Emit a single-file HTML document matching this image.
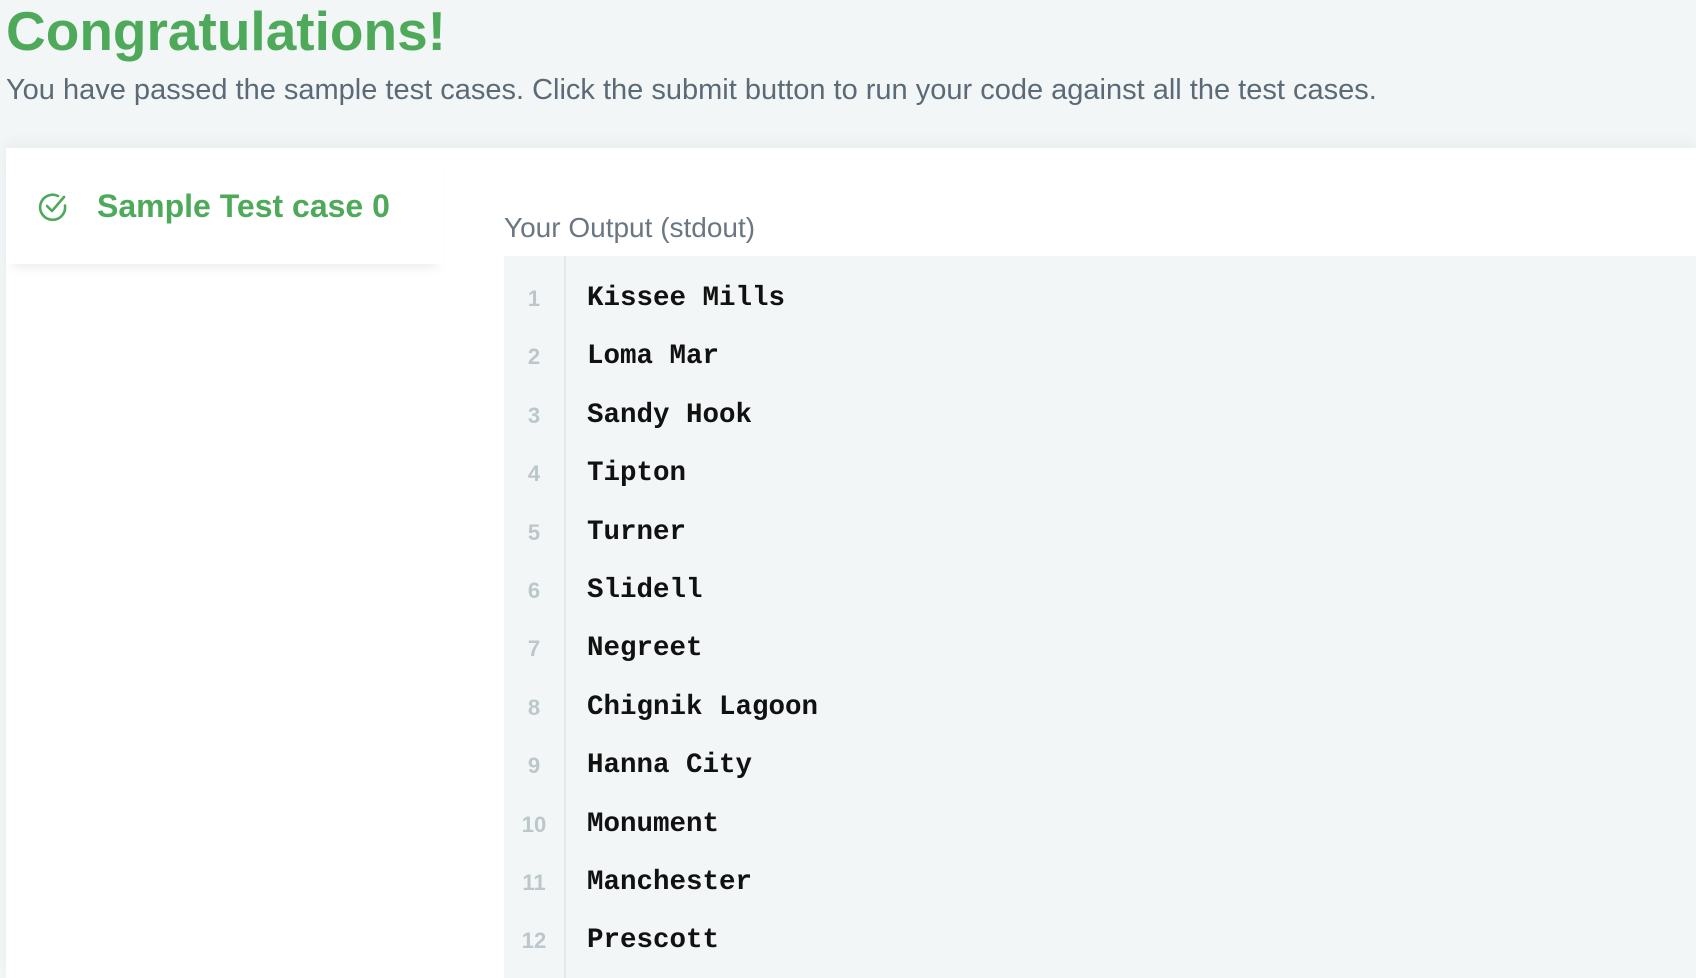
<!DOCTYPE html>
<html><head><meta charset="utf-8"><style>
html,body{margin:0;padding:0;width:1696px;height:978px;overflow:hidden;background:#f2f6f7;font-family:"Liberation Sans",sans-serif;}
.title{position:absolute;left:6px;top:-1px;font-size:55px;font-weight:bold;color:#4eaa5a;line-height:64px;}
.sub{position:absolute;left:6px;top:71px;font-size:29px;color:#5b6a76;line-height:38px;}
.panel{position:absolute;left:6px;top:148px;width:1690px;height:830px;background:#fff;box-shadow:0 -6px 14px rgba(0,0,0,0.04);}
.tab{position:absolute;left:0;top:0;width:437px;height:116px;background:#fff;box-shadow:0 10px 10px -6px rgba(0,0,0,0.07);}
.tab svg{position:absolute;left:31px;top:43px;}
.tab .t{position:absolute;left:91px;top:38px;font-size:32px;font-weight:bold;color:#4eaa5a;line-height:40px;}
.lbl{position:absolute;left:498px;top:62px;font-size:28px;color:#6a7783;line-height:36px;}
.code{position:absolute;left:498px;top:108px;right:0;bottom:0;background:#f3f6f7;}
.gut{position:absolute;left:0;top:0;width:60px;bottom:0;border-right:2px solid #e3e8ea;}
.row{position:absolute;left:0;height:58px;line-height:58px;width:100%;}
.row .n{position:absolute;left:0;width:60px;text-align:center;font-size:22px;font-weight:bold;color:#bcc7cb;font-family:"Liberation Sans",sans-serif;}
.row .c{position:absolute;left:83px;font-family:"Liberation Mono",monospace;font-weight:bold;font-size:27.5px;color:#111;}
</style></head><body>
<div class="title">Congratulations!</div>
<div class="sub">You have passed the sample test cases. Click the submit button to run your code against all the test cases.</div>
<div class="panel">
  <div class="tab">
    <svg width="32" height="32" viewBox="0 0 32 32" fill="none" stroke="#4eaa5a" stroke-width="2.6" stroke-linecap="round" stroke-linejoin="round">
      <path d="M28 14.5 A12.5 12.5 0 1 1 21 5"/>
      <path d="M10 15 L15 20 L27 6"/>
    </svg>
    <div class="t">Sample Test case 0</div>
  </div>
  <div class="lbl">Your Output (stdout)</div>
  <div class="code">
    <div class="gut"></div>
    <div class="row" style="top:14px"><span class="n">1</span><span class="c">Kissee Mills</span></div>
    <div class="row" style="top:72px"><span class="n">2</span><span class="c">Loma Mar</span></div>
    <div class="row" style="top:131px"><span class="n">3</span><span class="c">Sandy Hook</span></div>
    <div class="row" style="top:189px"><span class="n">4</span><span class="c">Tipton</span></div>
    <div class="row" style="top:248px"><span class="n">5</span><span class="c">Turner</span></div>
    <div class="row" style="top:306px"><span class="n">6</span><span class="c">Slidell</span></div>
    <div class="row" style="top:364px"><span class="n">7</span><span class="c">Negreet</span></div>
    <div class="row" style="top:423px"><span class="n">8</span><span class="c">Chignik Lagoon</span></div>
    <div class="row" style="top:481px"><span class="n">9</span><span class="c">Hanna City</span></div>
    <div class="row" style="top:540px"><span class="n">10</span><span class="c">Monument</span></div>
    <div class="row" style="top:598px"><span class="n">11</span><span class="c">Manchester</span></div>
    <div class="row" style="top:656px"><span class="n">12</span><span class="c">Prescott</span></div>
  </div>
</div>
</body></html>
